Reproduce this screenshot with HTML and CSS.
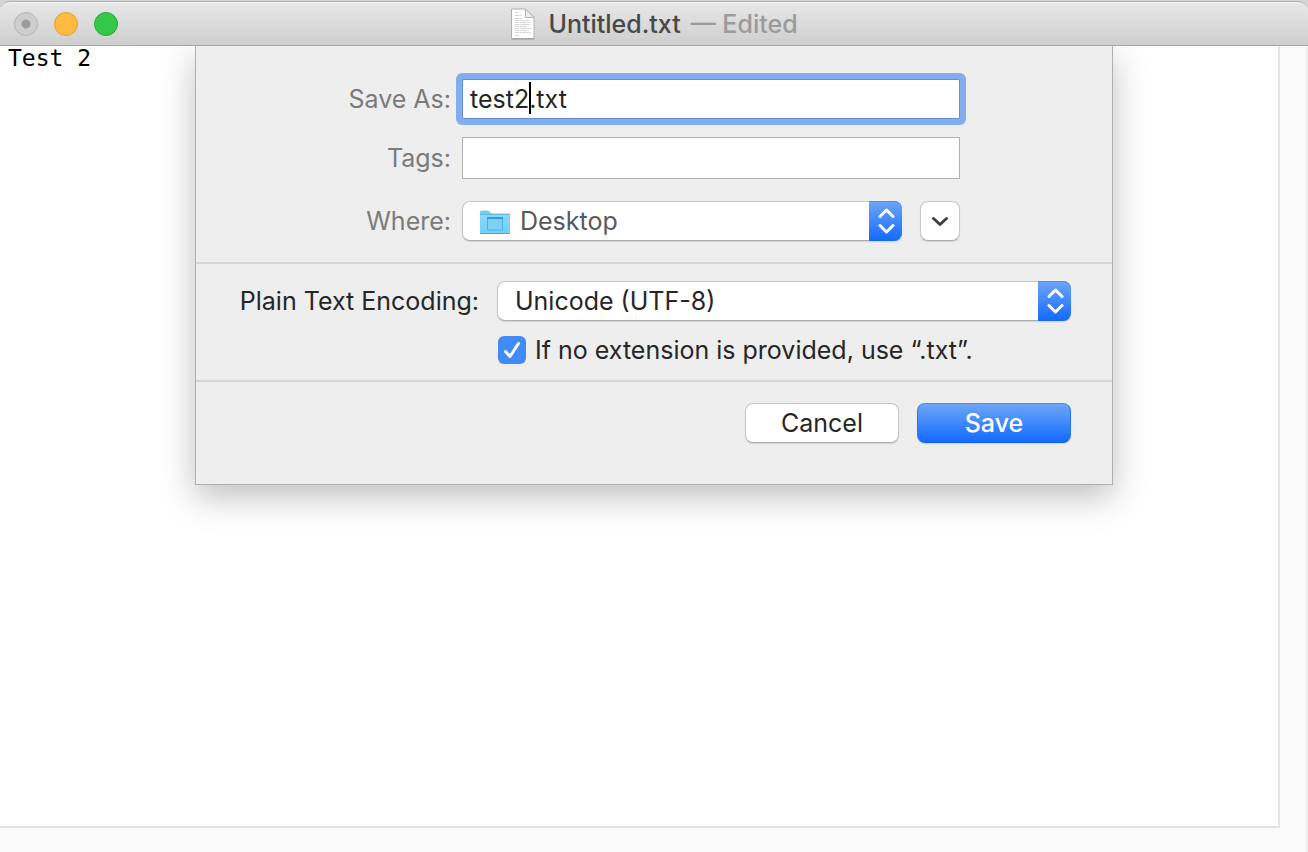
FILE: index.html
```
<!DOCTYPE html>
<html lang="en">
<head>
    <meta charset="UTF-8">
    <title>Untitled.txt</title>
    <meta name="viewport" content="width=device-width, initial-scale=1.0">
    <link rel="stylesheet" href="styles.css">
</head>
<body>

    <div class="window">
        <header class="titlebar">
            <div class="lights">
                <button class="light close" aria-label="Close"></button>
                <button class="light minimize" aria-label="Minimize"></button>
                <button class="light zoom" aria-label="Zoom"></button>
            </div>
            <h1 class="title">
                <svg class="doc-icon" width="26" height="32" viewBox="0 0 26 32">
                    <path d="M1.500 1h14l8.500 8.500v21H1.500z" fill="#fff" stroke="#b0b0b0"/>
                    <path d="M1.500 31h22.500" stroke="#999"/>
                    <path d="M15.500 1v8.500h8.500z" fill="#ededed" stroke="#b5b5b5"/>
                    <path d="M5 4.500h3M5 7.500h7M5 10.500h7M5 12.500h15M5 14.500h16M5 16.500h15M5 18.500h12M5 20.500h16M5 22.500h14M5 24.500h16M5 27.500h5" stroke="#d2d2d2" stroke-dasharray="4 .6 2 .5"/>
                </svg>
                <span class="name">Untitled.txt</span>
                <span class="state">— Edited</span>
            </h1>
        </header>

        <main class="content">
            <textarea class="editor" aria-label="Document text" spellcheck="false">Test 2</textarea>

            <form class="sheet" onsubmit="return false">
                <div class="file-fields">
                    <label for="filename">Save As:</label>
                    <div class="name-field">
                        <input class="text-input focused" id="filename" type="text" value="test2.txt" spellcheck="false" autocomplete="off">
                        <span class="caret"></span>
                    </div>

                    <label for="tags">Tags:</label>
                    <input class="text-input tags" id="tags" type="text">

                    <label class="where-label" for="where">Where:</label>
                    <div class="where">
                        <div class="popup">
                            <svg class="folder" width="32" height="26" viewBox="0 0 32 26">
                                <defs>
                                    <linearGradient id="folder-fill" x1="0" y1="0" x2="0" y2="1">
                                        <stop offset="0" stop-color="#86d9fa"/>
                                        <stop offset="1" stop-color="#74cef7"/>
                                    </linearGradient>
                                </defs>
                                <path d="M1 24V3Q1 1.500 2.500 1.500H8.500Q10 1.500 11 3t2.500 1.500H29.500Q31 4.500 31 6V24z" fill="#7ccbea"/>
                                <path d="M1 6h30v18H1z" fill="url(#folder-fill)"/>
                                <path d="M1 5.500h30" stroke="#64b9de"/>
                                <path d="M1 24.500h30" stroke="#55a9d0"/>
                                <path d="M8.500 8.500h15v12.500h-15z" fill="#7bd1f8" stroke="#4fb0e2"/>
                                <path d="M8 9h16" stroke="#3f9bd0" stroke-width="2"/>
                            </svg>
                            <select class="select select-where" id="where">
                                <option>Desktop</option>
                            </select>
                            <span class="stepper">
                                <svg width="18" height="26" viewBox="0 0 18 26" fill="none" stroke="#fff" stroke-width="3" stroke-linecap="round" stroke-linejoin="round">
                                    <path d="M3 8.500l6.500-6.500 6.500 6.500M3 17.500l6.500 6.500 6.500-6.500"/>
                                </svg>
                            </span>
                        </div>
                        <button class="button expand" type="button" aria-label="Show more locations">
                            <svg width="18" height="12" viewBox="0 0 18 12" fill="none" stroke="#404040" stroke-width="3" stroke-linecap="round" stroke-linejoin="round">
                                <path d="M2.500 3.500l6.500 6 6.500-6"/>
                            </svg>
                        </button>
                    </div>
                </div>

                <div class="options">
                    <label for="encoding">Plain Text Encoding:</label>
                    <div class="popup">
                        <select class="select" id="encoding">
                            <option>Unicode (UTF-8)</option>
                        </select>
                        <span class="stepper">
                            <svg width="18" height="26" viewBox="0 0 18 26" fill="none" stroke="#fff" stroke-width="3" stroke-linecap="round" stroke-linejoin="round">
                                <path d="M3 8.500l6.500-6.500 6.500 6.500M3 17.500l6.500 6.500 6.500-6.500"/>
                            </svg>
                        </span>
                    </div>
                    <div class="extension">
                        <span class="tick">
                            <input class="checkbox" id="extension" type="checkbox" checked>
                            <svg class="mark" width="28" height="28" viewBox="0 0 28 28" fill="none" stroke="#fff" stroke-width="3" stroke-linecap="round" stroke-linejoin="round">
                                <path d="M7.500 15.500l4.500 5 8.500-13"/>
                            </svg>
                        </span>
                        <label for="extension">If no extension is provided, use “.txt”.</label>
                    </div>
                </div>

                <div class="actions">
                    <button class="button" type="button">Cancel</button>
                    <button class="button primary" type="submit">Save</button>
                </div>
            </form>
        </main>
    </div>

</body>
</html>
```

FILE: styles.css
```
* {
    box-sizing: border-box;
}
body {
    margin: 0;
    background: #d4d4d4;
    font-family: Inter, "Liberation Sans", sans-serif;
    font-size: 25px;
    line-height: 32px;
    color: #262626;
}
button, input, select {
    font: inherit;
    color: inherit;
    margin: 0;
}
.window {
    display: flex;
    flex-direction: column;
    min-height: 100vh;
    padding-top: 1px;
}

/* Title bar */
.titlebar {
    display: grid;
    grid-template-columns: 1fr auto 1fr;
    align-items: center;
    height: 45px;
    padding: 0 14px;
    background: linear-gradient(#e8e8e8, #cecece);
    border-top: 1px solid #b0b0b0;
    border-bottom: 1px solid #a6a6a6;
    border-radius: 10px 10px 0 0;
    box-shadow: inset 0 1px #f4f4f4;
}
.lights {
    display: flex;
    gap: 16px;
}
.light {
    width: 24px;
    height: 24px;
    padding: 0;
    border: 1px solid #b3b3b3;
    border-radius: 50%;
    background: #cecece;
}
.close {
    background: radial-gradient(circle, #9c9c9c 4px, #cecece 5px);
}
.minimize {
    background: #fdbc40;
    border-color: #de9f34;
}
.zoom {
    background: #34c84a;
    border-color: #27aa35;
}
.title {
    display: flex;
    align-items: center;
    gap: 10px;
    margin: 0;
    font-size: 25px;
    font-weight: 500;
    color: #484848;
}
.doc-icon {
    margin-right: 2px;
}
.state {
    color: #9b9b9b;
}

/* Document */
.content {
    position: relative;
    flex: 1;
    display: flex;
    padding: 0 26px 24px 0;
    background: #fafafa;
    border-right: 2px solid #eee;
}
.editor {
    flex: 1;
    padding: 0 8px;
    border: solid #e4e4e4;
    border-width: 0 2px 2px 0;
    background: #fff;
    font-family: "DejaVu Sans Mono", monospace;
    font-size: 23px;
    line-height: 24px;
    color: #000;
    resize: none;
    outline: none;
}

/* Save sheet, hangs from the title bar over the document */
.sheet {
    position: absolute;
    top: 0;
    left: 0;
    right: -2px;
    margin: 0 auto;
    max-width: 918px;
    background: #eee;
    border: 1px solid #b0b0b0;
    border-top: 0;
    box-shadow: 0 12px 32px rgba(0, 0, 0, 0.25);
    clip-path: inset(0 -60px -80px -60px);
}
.file-fields {
    display: grid;
    grid-template-columns: 255px 498px;
    column-gap: 11px;
    row-gap: 18px;
    align-items: center;
    padding: 33px 0 21px;
    color: #7b7b7b;
}
.file-fields > label {
    text-align: right;
}
.text-input {
    width: 100%;
    height: 40px;
    padding: 0 7px;
    border: 1px solid #b1b1b1;
    border-radius: 0;
    background: #fff;
    color: #262626;
    outline: none;
}
.tags {
    height: 42px;
}
.name-field {
    position: relative;
    display: flex;
}
.focused {
    border-color: #668fd3;
    box-shadow: 0 0 0 6px #82adee;
    border-radius: 2px;
    caret-color: transparent;
}
.caret {
    position: absolute;
    top: 3px;
    left: 67px;
    width: 2px;
    height: 32px;
    background: #000;
}
.where, .where-label {
    margin-top: 4px;
}
.where {
    display: flex;
    gap: 18px;
    color: #595959;
}
.popup {
    position: relative;
    flex: 1;
    display: flex;
}
.select {
    flex: 1;
    height: 40px;
    padding: 0 44px 0 17px;
    appearance: none;
    border: 1px solid #c6c6c6;
    border-bottom-color: #adadad;
    border-radius: 8px;
    background: #fff;
    box-shadow: 0 1px 1px rgba(0, 0, 0, 0.12);
}
.select-where {
    padding-left: 57px;
}
.folder {
    position: absolute;
    top: 8px;
    left: 17px;
}
.stepper {
    position: absolute;
    top: 0;
    right: 0;
    bottom: 0;
    display: flex;
    align-items: center;
    justify-content: center;
    width: 33px;
    border-radius: 0 8px 8px 0;
    background: linear-gradient(#6ea6f8, #126aff);
    box-shadow: inset 0 1px #4d8df0;
    pointer-events: none;
}
.button {
    display: flex;
    align-items: center;
    justify-content: center;
    width: 154px;
    height: 40px;
    padding: 0;
    border: 1px solid #c6c6c6;
    border-bottom-color: #adadad;
    border-radius: 8px;
    background: #fff;
    box-shadow: 0 1px 1px rgba(0, 0, 0, 0.12);
}
.expand {
    width: 40px;
}
.primary {
    border-color: #4a8cf2 #2c76ee #1263e8;
    background: linear-gradient(#6ea6f8, #126aff);
    color: #fff;
    font-weight: 500;
}

/* Encoding options */
.options {
    display: grid;
    grid-template-columns: auto 574px;
    column-gap: 18px;
    row-gap: 15px;
    align-items: center;
    justify-content: end;
    padding: 17px 41px 16px;
    border: solid #d6d6d6;
    border-width: 2px 0;
}
.extension {
    grid-column: 2;
    display: flex;
    align-items: center;
    gap: 9px;
    height: 28px;
    padding-left: 1px;
}
.tick {
    position: relative;
    display: flex;
}
.checkbox {
    appearance: none;
    width: 28px;
    height: 28px;
    border-radius: 6px;
    background: #418bf9;
}
.mark {
    position: absolute;
    top: 0;
    left: 0;
    pointer-events: none;
}

.actions {
    display: flex;
    justify-content: flex-end;
    gap: 18px;
    padding: 21px 41px 41px;
}
```
